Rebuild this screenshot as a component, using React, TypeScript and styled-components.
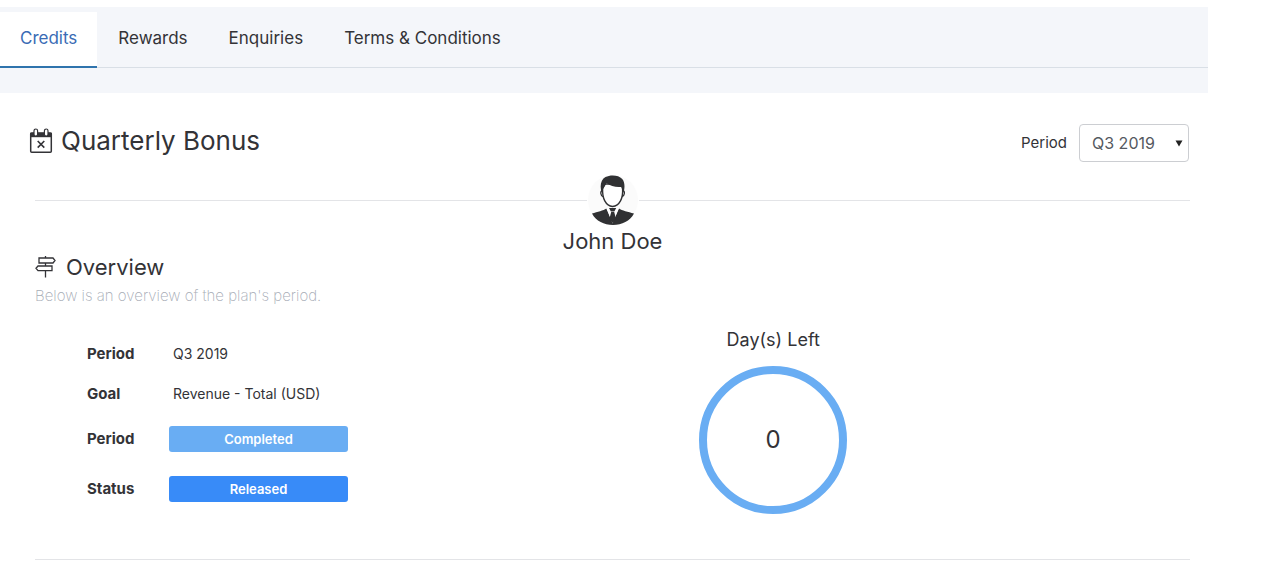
import React, { useState } from "react";
import styled, { createGlobalStyle } from "styled-components";

const GlobalStyle = createGlobalStyle`
  * { box-sizing: border-box; }
  body {
    margin: 0;
    background: #fff;
    color: #333337;
    font-family: Inter, "Open Sans", sans-serif;
    font-size: 14px;
  }
  h1, h2, h3, p, dl, dd { margin: 0; font-weight: 400; }
`;

const Page = styled.div`
  padding: 7px 53px 0 0;
`;

const TabBar = styled.header`
  background: #f4f6fa;
  padding: 5px 0 25px;
`;

const Tabs = styled.nav`
  display: flex;
  gap: 1px;
  border-bottom: 1px solid #d9dfe6;
`;

const Tab = styled.a<{ $active?: boolean }>`
  padding: 14px 20px 0;
  height: 56px;
  margin-bottom: -1px;
  font-size: 17px;
  line-height: 24px;
  text-decoration: none;
  white-space: nowrap;
  color: ${(p) => (p.$active ? "#3a6cb5" : "#333337")};
  background: ${(p) => (p.$active ? "#fff" : "transparent")};
  border-bottom: 2px solid ${(p) => (p.$active ? "#2f74ad" : "transparent")};
`;

const Content = styled.main`
  padding: 31px 18px 0 35px;
`;

const TitleRow = styled.div`
  display: flex;
  justify-content: space-between;
  align-items: center;
  margin-left: -6px;
`;

const Title = styled.h1`
  display: flex;
  align-items: center;
  gap: 8px;
  padding-bottom: 4px;
  font-size: 26px;
  line-height: 32px;
`;

const PeriodField = styled.div`
  display: flex;
  align-items: center;
  gap: 12px;
  padding-right: 1px;
`;

const FieldLabel = styled.label`
  font-size: 15px;
  line-height: 20px;
`;

const SelectFrame = styled.div`
  display: grid;
  align-items: center;
  grid-template-columns: 1fr 14px;
`;

const Select = styled.select`
  grid-area: 1 / 1 / 2 / 3;
  appearance: none;
  width: 110px;
  height: 38px;
  padding: 0 12px;
  border: 1px solid #ccced2;
  border-radius: 4px;
  background: #fff;
  color: #55595f;
  font: 400 16px/24px Inter, "Open Sans", sans-serif;
`;

const Arrow = styled.svg`
  grid-area: 1 / 2 / 2 / 3;
  pointer-events: none;
`;

const Person = styled.section`
  display: grid;
  grid-template-columns: 1fr 52px 1fr;
  align-items: center;
  justify-items: center;
  margin-top: 13px;
`;

const Rule = styled.hr`
  width: 100%;
  margin: 0;
  border: 0;
  border-top: 1px solid #e3e4e7;
`;

const PersonName = styled.h2`
  grid-column: 1 / -1;
  text-align: center;
  font-size: 22px;
  line-height: 32px;
`;

const SectionTitle = styled.h2`
  display: flex;
  align-items: center;
  gap: 10px;
  margin-top: -4px;
  font-size: 22px;
  line-height: 28px;
`;

const Hint = styled.p`
  margin-top: 4px;
  font-size: 15px;
  line-height: 22px;
  font-weight: 200;
  color: #a6abb5;
`;

const Overview = styled.section`
  display: grid;
  grid-template-columns: 50% 28% 22%;
  padding-bottom: 45px;
`;

const Details = styled.dl`
  display: grid;
  grid-template-columns: 82px 179px;
  grid-template-rows: 40px 40px 50px 50px;
  align-items: center;
  padding: 27px 0 0 52px;
`;

const Term = styled.dt`
  font-size: 15px;
  line-height: 20px;
  font-weight: 700;
`;

const Value = styled.dd`
  font-size: 14px;
  line-height: 20px;
  padding-left: 4px;
`;

const Badge = styled.dd<{ $color: string }>`
  background: ${(p) => p.$color};
  color: #fff;
  border-radius: 3px;
  text-align: center;
  font-size: 13px;
  line-height: 26px;
  && { font-weight: 600; }
`;

const Countdown = styled.div`
  display: flex;
  flex-direction: column;
  align-items: center;
  gap: 14px;
  padding: 21px 2px 0 0;
`;

const CountdownLabel = styled.h3`
  font-size: 18px;
  line-height: 24px;
`;

const Ring = styled.div`
  display: grid;
  place-items: center;
  width: 148px;
  height: 148px;
  border: 8px solid #69adf3;
  border-radius: 50%;
  font-size: 24px;
  line-height: 32px;
`;

const CalendarIcon = () => (
  <svg width="24" height="26" viewBox="0 0 24 26" fill="none" aria-hidden="true">
    <rect x="1.7" y="5" width="20.6" height="19.3" rx="1" stroke="#333337" strokeWidth="1.5" />
    <path d="M1 4.8h22v4.400H1z" fill="#333337" />
    <rect x="5" y="1" width="3.6" height="7" rx="1.8" fill="#fff" stroke="#333337" strokeWidth="1.2" />
    <rect x="15.4" y="1" width="3.6" height="7" rx="1.8" fill="#fff" stroke="#333337" strokeWidth="1.2" />
    <path d="M8.7 13l6.600 6.600M15.3 13l-6.600 6.600" stroke="#333337" strokeWidth="1.6" />
  </svg>
);

const SignpostIcon = () => (
  <svg width="21" height="22" viewBox="0 0 21 22" fill="none" stroke="#333337" strokeWidth="1.3" aria-hidden="true">
    <path d="M10.500 0v2M10.500 7v3M10.500 14.500v7" />
    <path d="M4 2h14l2 2.500-2 2.500H4z" />
    <path d="M17 10H3L1 12.300 3 14.600H17z" />
  </svg>
);

const Avatar = () => (
  <svg width="50" height="50" viewBox="0 0 50 50" role="img" aria-label="Avatar">
    <circle cx="25" cy="25" r="25" fill="#fbfbfb" />
    <path d="M14.400 15.500c-2.600.4-1.800 5.600 1 6.400M34.800 15.500c2.600.4 1.800 5.600-1 6.400" fill="#fff" stroke="#303133" strokeWidth="1.300" />
    <path
      d="M14.600 14C14.200 23 17.500 30.800 24.600 31.500C31.700 30.800 35.200 23 34.600 14L33 9H17Z"
      fill="#fff"
      stroke="#303133"
      strokeWidth="1.4"
    />
    <path
      d="M13.700 18C11.400 10.500 13 4.500 17.500 2C22.500-.6 31 0 34 3.800C37.500 7.500 36.600 14 35.500 18C34.800 16 34.900 13.800 33.600 11.900C28.500 12.500 22.500 11.500 18.500 8C17.700 11 15.500 11.500 14.800 14Z"
      fill="#303133"
    />
    <path d="M4 38.500C9.500 36.800 15.500 35.700 18.300 33.500L24.500 48L31 33.500C34 35.700 40 36.800 46 38.500C42 46 34 50 25 50C16 50 8 46 4 38.500Z" fill="#303133" />
    <path d="M18.600 33L24.600 48.500L30.800 33Z" fill="#fff" />
    <path d="M21 33h7.200l-1.900 3.600h-3.400zM23.200 37h3l2 7.500-3.500 3.500-3.500-3.500z" fill="#303133" />
  </svg>
);

const TAB_NAMES = ["Credits", "Rewards", "Enquiries", "Terms & Conditions"];

export default function App() {
  const [active, setActive] = useState("Credits");
  const [period, setPeriod] = useState("Q3 2019");

  return (
    <>
      <GlobalStyle />
      <Page>
        <TabBar>
          <Tabs>
            {TAB_NAMES.map((name) => (
              <Tab
                key={name}
                href="#"
                $active={name === active}
                onClick={(e) => {
                  e.preventDefault();
                  setActive(name);
                }}
              >
                {name}
              </Tab>
            ))}
          </Tabs>
        </TabBar>
        <Content>
          <TitleRow>
            <Title>
              <CalendarIcon />
              Quarterly Bonus
            </Title>
            <PeriodField>
              <FieldLabel htmlFor="period">Period</FieldLabel>
              <SelectFrame>
                <Select id="period" value={period} onChange={(e) => setPeriod(e.target.value)}>
                  <option>Q3 2019</option>
                </Select>
                <Arrow width="8" height="7" viewBox="0 0 8 7" aria-hidden="true">
                  <path d="M.5.500h7L4 6.500z" fill="#222" />
                </Arrow>
              </SelectFrame>
            </PeriodField>
          </TitleRow>
          <Person>
            <Rule />
            <Avatar />
            <Rule />
            <PersonName>John Doe</PersonName>
          </Person>
          <SectionTitle>
            <SignpostIcon />
            Overview
          </SectionTitle>
          <Hint>Below is an overview of the plan's period.</Hint>
          <Overview>
            <Details>
              <Term>Period</Term>
              <Value>Q3 2019</Value>
              <Term>Goal</Term>
              <Value>Revenue - Total (USD)</Value>
              <Term>Period</Term>
              <Badge $color="#69adf3">Completed</Badge>
              <Term>Status</Term>
              <Badge $color="#388bf8">Released</Badge>
            </Details>
            <Countdown>
              <CountdownLabel>Day(s) Left</CountdownLabel>
              <Ring>0</Ring>
            </Countdown>
          </Overview>
          <Rule />
        </Content>
      </Page>
    </>
  );
}
